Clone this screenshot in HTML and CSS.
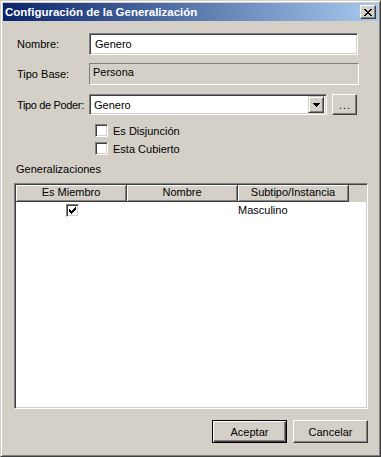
FILE: index.html
```html
<!DOCTYPE html>
<html>
<head>
<meta charset="utf-8">
<link rel="stylesheet" href="styles.css">
</head>
<body>
<div class="window">
  <div class="titlebar">
    <span class="title">Configuración de la Generalización</span>
    <span class="close"><svg width="8" height="7" viewBox="0 0 8 7" shape-rendering="crispEdges"><path fill="#000" d="M0 0h2v1h-2z M6 0h2v1h-2z M1 1h2v1h-2z M5 1h2v1h-2z M2 2h4v1h-4z M3 3h2v1h-2z M2 4h4v1h-4z M1 5h2v1h-2z M5 5h2v1h-2z M0 6h2v1h-2z M6 6h2v1h-2z"/></svg></span>
  </div>
  <div class="content">
    <div class="row r-nombre">
      <span class="lbl">Nombre:</span>
      <div class="edit">Genero</div>
    </div>
    <div class="row r-base">
      <span class="lbl">Tipo Base:</span>
      <div class="static">Persona</div>
    </div>
    <div class="row r-poder">
      <span class="lbl tight">Tipo de Poder:</span>
      <div class="combo">
        <span class="combo-text">Genero</span>
        <span class="drop"><svg width="7" height="4" viewBox="0 0 7 4" shape-rendering="crispEdges"><path fill="#000" d="M0 0h7v1h-7z M1 1h5v1h-5z M2 2h3v1h-3z M3 3h1v1h-1z"/></svg></span>
      </div>
      <button class="btn dots">...</button>
    </div>
    <div class="checks">
      <div class="check"><span class="cb"></span><span>Es Disjunción</span></div>
      <div class="check"><span class="cb"></span><span>Esta Cubierto</span></div>
    </div>
    <div class="section">Generalizaciones</div>
    <div class="listview">
      <div class="lv-header">
        <div class="hcell">Es Miembro</div>
        <div class="hcell">Nombre</div>
        <div class="hcell">Subtipo/Instancia</div>
      </div>
      <div class="lv-row">
        <div class="cell center"><span class="cb"><svg width="7" height="7" viewBox="0 0 7 7" shape-rendering="crispEdges"><path fill="#000" d="M0 2h1v3h-1z M1 3h1v3h-1z M2 4h1v3h-1z M3 3h1v3h-1z M4 2h1v3h-1z M5 1h1v3h-1z M6 0h1v3h-1z"/></svg></span></div>
        <div class="cell"></div>
        <div class="cell text">Masculino</div>
      </div>
    </div>
    <div class="buttons">
      <button class="btn default">Aceptar</button>
      <button class="btn">Cancelar</button>
    </div>
  </div>
</div>
</body>
</html>
```
FILE: styles.css
```css
* { box-sizing: border-box; }
html, body { margin: 0; padding: 0; }
body {
  width: 381px;
  height: 457px;
  overflow: hidden;
  font-family: "Liberation Sans", Arial, sans-serif;
  font-size: 11px;
  color: #000;
  background: #d4d0c8;
}
.window {
  width: 381px;
  height: 457px;
  background: #d4d0c8;
  border: 1px solid;
  border-color: #d4d0c8 #404040 #404040 #d4d0c8;
  box-shadow: inset 1px 1px #fff, inset -1px -1px #808080;
  padding: 2px;
  display: flex;
  flex-direction: column;
}
.titlebar {
  height: 18px;
  flex: none;
  background: linear-gradient(to right, #0a246a, #a6caf0);
  display: flex;
  align-items: center;
  justify-content: space-between;
  padding: 0 2px 0 2px;
}
.title {
  color: #fff;
  font-weight: bold;
  font-size: 11.5px;
}
.close {
  width: 16px;
  height: 14px;
  background: #d4d0c8;
  border: 1px solid;
  border-color: #fff #404040 #404040 #fff;
  box-shadow: inset -1px -1px #808080;
  display: flex;
  align-items: center;
  justify-content: center;
}
.content {
  padding: 0 10px 0 14px;
  display: flex;
  flex-direction: column;
}
.row {
  display: flex;
  align-items: center;
}
.lbl { width: 72px; flex: none; white-space: nowrap; }
.lbl.tight { letter-spacing: -0.35px; }
.r-nombre { margin-top: 12px; }
.r-base { margin-top: 8px; }
.r-poder { margin-top: 9px; }
.edit {
  width: 269px;
  height: 22px;
  background: #fff;
  border: 1px solid;
  border-color: #808080 #fff #fff #808080;
  box-shadow: inset 1px 1px #404040, inset -1px -1px #d4d0c8;
  padding: 0 5px;
  display: flex;
  align-items: center;
}
.static {
  width: 270px;
  height: 22px;
  border: 1px solid;
  border-color: #808080 #fff #fff #808080;
  padding: 2px 3px 0;
}
.combo {
  width: 238px;
  height: 21px;
  background: #fff;
  border: 1px solid;
  border-color: #808080 #fff #fff #808080;
  box-shadow: inset 1px 1px #404040, inset -1px -1px #d4d0c8;
  padding: 2px;
  display: flex;
  align-items: center;
}
.combo-text { flex: 1; padding-left: 2px; }
.drop {
  width: 16px;
  height: 17px;
  background: #d4d0c8;
  border: 1px solid;
  border-color: #d4d0c8 #404040 #404040 #d4d0c8;
  box-shadow: inset 1px 1px #fff, inset -1px -1px #808080;
  display: flex;
  align-items: center;
  justify-content: center;
}
.btn {
  font: inherit;
  color: #000;
  background: #d4d0c8;
  border: 1px solid;
  border-color: #fff #404040 #404040 #fff;
  box-shadow: inset -1px -1px #808080;
  padding: 0;
  margin: 0;
  height: 23px;
  width: 75px;
}
.dots {
  width: 25px;
  height: 21px;
  margin-left: 5px;
  letter-spacing: 1px;
  padding-left: 1px;
}
.checks {
  margin-top: 9px;
  margin-left: 78px;
  display: flex;
  flex-direction: column;
  gap: 5px;
}
.check {
  display: flex;
  align-items: center;
  gap: 5px;
  height: 13px;
}
.cb {
  width: 13px;
  height: 13px;
  flex: none;
  background: #fff;
  border: 1px solid;
  border-color: #808080 #fff #fff #808080;
  box-shadow: inset 1px 1px #404040, inset -1px -1px #d4d0c8;
  display: flex;
  align-items: center;
  justify-content: center;
}
.section {
  margin-top: 8px;
  margin-left: -1px;
  line-height: 13px;
}
.listview {
  margin-top: 7px;
  margin-left: -3px;
  width: 354px;
  height: 226px;
  background: #fff;
  border: 1px solid;
  border-color: #808080 #fff #fff #808080;
  box-shadow: inset 1px 1px #404040, inset -1px -1px #d4d0c8;
  padding: 1px;
  display: flex;
  flex-direction: column;
}
.lv-header {
  height: 17px;
  background: #d4d0c8;
  display: flex;
  flex: none;
}
.hcell {
  width: 111px;
  height: 17px;
  border-right: 1px solid #404040;
  border-bottom: 1px solid #404040;
  box-shadow: inset 1px 1px #fff, inset -1px -1px #808080;
  text-align: center;
  line-height: 15px;
}
.lv-row {
  display: flex;
  height: 16px;
  align-items: center;
}
.cell { width: 111px; }
.cell.center { display: flex; justify-content: center; padding-left: 1px; }
.cell.text { padding-left: 0; }
.buttons {
  margin-top: 11px;
  display: flex;
  justify-content: flex-end;
  gap: 6px;
}
.btn.default {
  border: 1px solid #000;
  box-shadow: inset 1px 1px #fff, inset -1px -1px #404040, inset -2px -2px #808080;
}
```
